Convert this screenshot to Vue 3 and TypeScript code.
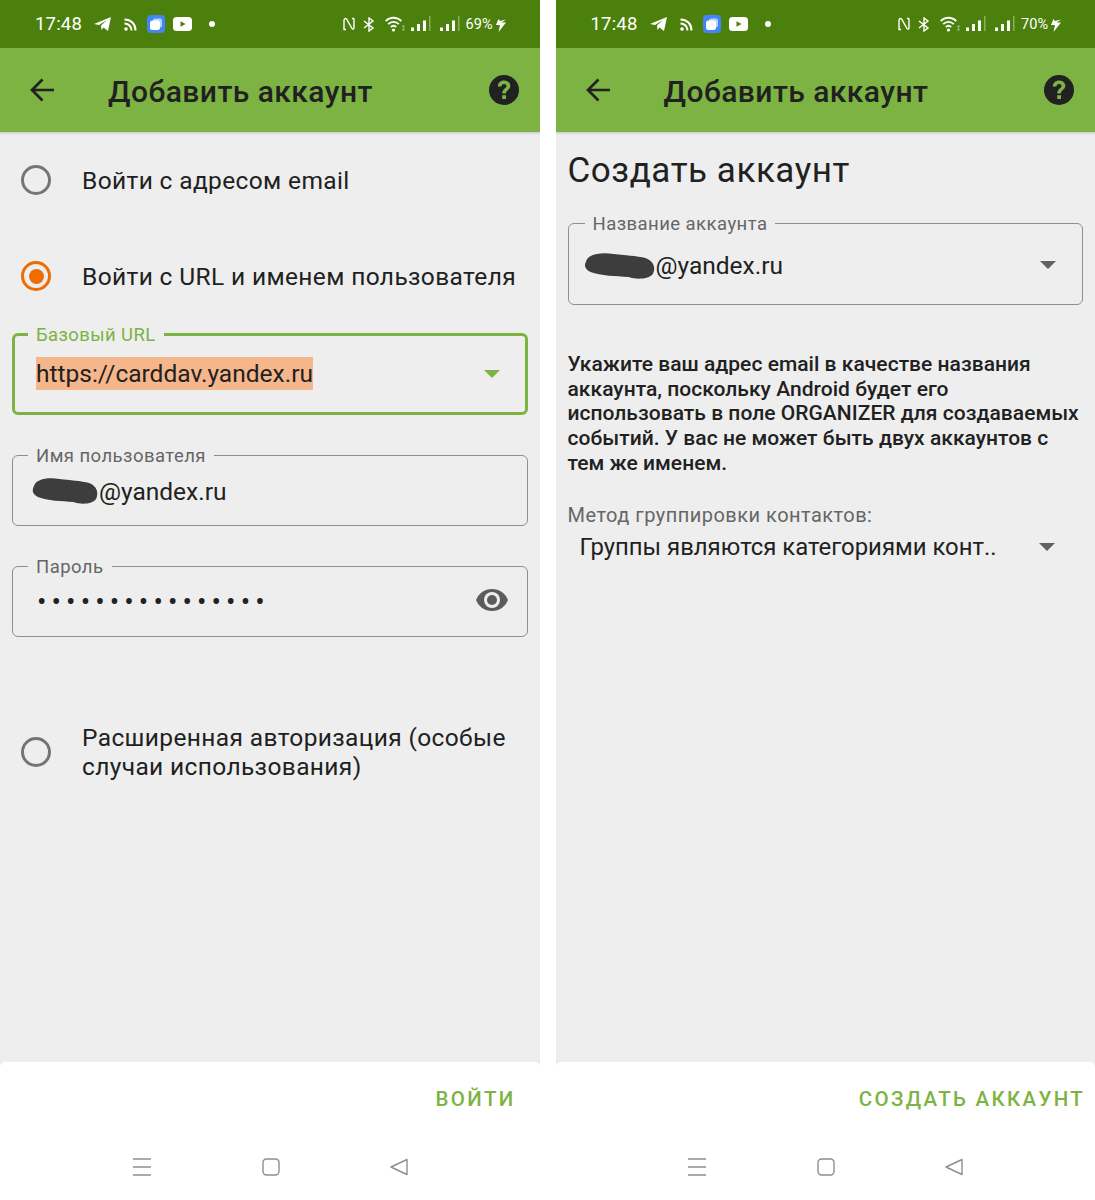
<script setup lang="ts">
interface Phone {
  id: string
  battery: string
  action: string
}
const phones: Phone[] = [
  { id: 'login', battery: '69%', action: 'ВОЙТИ' },
  { id: 'create', battery: '70%', action: 'СОЗДАТЬ АККАУНТ' },
]
const blobPath = 'M4 9C6 2 18 0 30 2C40 3 52 4 60 6C68 9 70 16 67 22C64 27 52 28 44 25C32 24 18 24 8 20C2 17 2 13 4 9Z'
</script>

<template>
  <div class="screens">
    <section v-for="phone in phones" :key="phone.id" class="phone">
      <div class="status">
        <span class="time">17:48</span>
        <svg class="ic tg" width="18" height="16" viewBox="0 0 18 16"><path d="M0 8 17 1 14 15 9.500 11.500 7.500 14 7 9.500 13 4 5 9Z" fill="#fff"/></svg>
        <svg class="ic rss" width="13" height="13" viewBox="0 0 13 13" fill="none" stroke="#fff" stroke-width="2"><circle cx="2" cy="11" r="1.800" fill="#fff" stroke="none"/><path d="M0.500 5.500C4.500 5.500 7.500 8.500 7.500 12.500M0.500 1.500C7 1.500 11.500 6 11.500 12.500"/></svg>
        <svg class="ic app" width="18" height="18" viewBox="0 0 18 18"><rect width="18" height="18" rx="4" fill="#4285f4"/><rect x="6" y="3.500" width="9" height="9" rx="2" fill="#b9d2fb"/><rect x="3" y="5.500" width="10" height="9.500" rx="2.500" fill="#fff"/></svg>
        <svg class="ic yt" width="19" height="14" viewBox="0 0 19 14"><rect width="19" height="14" rx="3.500" fill="#fff"/><path d="M7.500 4.200 12.500 7 7.500 9.800Z" fill="#4c800c"/></svg>
        <span class="dot"></span>
        <span class="status-gap"></span>
        <svg class="ic nfc" width="12" height="14" viewBox="0 0 12 14" fill="none" stroke="#fff" stroke-width="1.400"><path d="M1 3.500C1 1.500 2.500 1 3.500 2L9 11.500C9.600 12.500 11 12.300 11 10.500V1.500M1 3.500V12.500H3M11 1.500H9"/></svg>
        <svg class="ic bt" width="12" height="15" viewBox="0 0 12 15" fill="none" stroke="#fff" stroke-width="1.400"><path d="M1 4 10 11 6 14V1L10 4 1 11"/></svg>
        <svg class="ic wifi" width="20" height="16" viewBox="0 0 20 16" fill="none" stroke="#fff" stroke-width="1.800"><path d="M.7 5.200C5 .6 12 .6 16.300 5.200M3.200 8.200C6.300 5 10.700 5 13.800 8.200M5.800 11C7.500 9.400 9.500 9.400 11.200 11"/><circle cx="8.500" cy="14" r="1.600" fill="#fff" stroke="none"/><path d="M18.500 9.500V15" stroke="#a6c185" stroke-width="2" stroke-dasharray="2 1"/></svg>
        <svg v-for="n in 2" :key="n" class="ic bars" width="20" height="16" viewBox="0 0 20 16"><rect x="0" y="11.500" width="3" height="3.500" fill="#fff"/><rect x="6" y="8" width="3" height="7" fill="#fff"/><rect x="12" y="4.500" width="3" height="10.500" fill="#fff"/><rect x="18" y="0" width="1.500" height="15" fill="#8bad5f"/></svg>
        <span class="battery">{{ phone.battery }}</span>
        <svg class="ic bolt" width="10" height="15" viewBox="0 0 10 15"><path d="M10 2.500 4 4 2.500 2 0 8H4L2.500 15 10 5.500H5.500Z" fill="#fff"/></svg>
      </div>

      <header class="appbar">
        <svg class="back" width="24" height="26" viewBox="0 0 24 26" fill="none" stroke="#212121" stroke-width="2.700"><path d="M24 13H2M12.500 2.500 2 13 12.500 23.500"/></svg>
        <h1>Добавить аккаунт</h1>
        <svg class="help" width="30" height="30" viewBox="0 0 30 30"><circle cx="15" cy="15" r="15" fill="#212121"/><path d="M8.800 11.500C8.800 7.800 11.500 5.400 15 5.400C18.700 5.400 21.300 7.600 21.300 10.800C21.300 14.800 17 15.100 17 18.600H13.200C13.200 13.600 17.500 13.400 17.500 11C17.500 9.700 16.400 8.900 15 8.900C13.500 8.900 12.500 10 12.500 11.500Z" fill="#7cb342"/><rect x="13.200" y="20.200" width="3.800" height="3.800" fill="#7cb342"/></svg>
      </header>

      <main v-if="phone.id === 'login'" class="body">
        <label class="radio-row">
          <span class="radio"></span>
          <span>Войти с адресом email</span>
        </label>
        <label class="radio-row">
          <span class="radio on"></span>
          <span>Войти с URL и именем пользователя</span>
        </label>

        <div class="field focused url">
          <span class="legend">Базовый URL</span>
          <span class="value"><span class="selected">https://carddav.yandex.ru</span></span>
          <span class="caret green"></span>
        </div>
        <div class="field user">
          <span class="legend">Имя пользователя</span>
          <span class="value">
            <svg class="blob" width="69" height="28" viewBox="0 0 70 28" preserveAspectRatio="none"><path :d="blobPath" fill="#3d3d3d"/></svg>@yandex.ru
          </span>
        </div>
        <div class="field pass">
          <span class="legend">Пароль</span>
          <span class="value dots">••••••••••••••••</span>
          <svg class="eye" width="34" height="24" viewBox="0 0 34 24"><path d="M17 1C9.500 1 3.500 5.500 1 12C3.500 18.500 9.500 23 17 23C24.500 23 30.500 18.500 33 12C30.500 5.500 24.500 1 17 1Z" fill="#5c5c5c"/><circle cx="17" cy="12" r="8" fill="#eee"/><circle cx="17" cy="12" r="5" fill="#5c5c5c"/></svg>
        </div>

        <label class="radio-row extra">
          <span class="radio"></span>
          <span>Расширенная авторизация (особые<br>случаи использования)</span>
        </label>
      </main>

      <main v-else class="body create">
        <h2>Создать аккаунт</h2>
        <div class="field account">
          <span class="legend">Название аккаунта</span>
          <span class="value">
            <svg class="blob" width="74" height="28" viewBox="0 0 70 28" preserveAspectRatio="none"><path :d="blobPath" fill="#3d3d3d"/></svg>@yandex.ru
          </span>
          <span class="caret"></span>
        </div>
        <p class="note">Укажите ваш адрес email в качестве названия аккаунта, поскольку Android будет его использовать в поле ORGANIZER для создаваемых событий. У вас не может быть двух аккаунтов с тем же именем.</p>
        <div class="group-label">Метод группировки контактов:</div>
        <div class="spinner">
          <span>Группы являются категориями конт..</span>
          <span class="caret"></span>
        </div>
      </main>

      <footer class="actions">
        <span>{{ phone.action }}</span>
      </footer>

      <nav class="navbar">
        <svg width="20" height="18" viewBox="0 0 20 18" fill="none" stroke="#8e8e8e" stroke-width="1.500"><path d="M1 1H19M1 9H19M1 17H19"/></svg>
        <svg width="18" height="18" viewBox="0 0 18 18" fill="none" stroke="#8e8e8e" stroke-width="1.400"><rect x="1" y="1" width="16" height="16" rx="3.500"/></svg>
        <svg width="18" height="18" viewBox="0 0 18 18" fill="none" stroke="#8e8e8e" stroke-width="1.400" stroke-linejoin="round"><path d="M17 1.500V16.500L1 9Z"/></svg>
      </nav>
    </section>
  </div>
</template>

<style>
html, body {
  margin: 0;
  background: #fff;
}
</style>

<style scoped>
.screens {
  display: flex;
  gap: 16px;
  width: 1095px;
  height: 1200px;
  overflow: hidden;
  font-family: Roboto, "Noto Sans", sans-serif;
  color: #212121;
}
.phone {
  flex: 1 1 0;
  display: flex;
  flex-direction: column;
  min-width: 0;
}
.status {
  height: 48px;
  flex: none;
  background: #4c800c;
  display: flex;
  align-items: center;
  padding: 0 26px 0 35px;
  color: #fff;
  box-sizing: border-box;
}
.time {
  font-size: 18.500px;
  margin-right: 12px;
  letter-spacing: 0.2px;
}
.ic {
  flex: none;
}
.tg {
  margin-right: 12px;
}
.rss {
  margin-right: 10px;
}
.app {
  margin-right: 8px;
}
.yt {
  margin-right: 17px;
}
.dot {
  width: 6px;
  height: 6px;
  border-radius: 50%;
  background: #fff;
}
.status-gap {
  flex: 1;
}
.nfc {
  margin-right: 8px;
}
.bt {
  margin-right: 10px;
}
.wifi {
  margin-right: 6px;
}
.bars {
  margin-right: 9px;
}
.bars + .bars {
  margin-right: 6px;
}
.battery {
  font-size: 14.500px;
  margin-right: 3px;
}
.bolt {
  margin-right: 8px;
}
.appbar {
  height: 84px;
  flex: none;
  background: #7cb342;
  display: flex;
  align-items: center;
  padding: 0 21px 0 30px;
  box-sizing: border-box;
}
.appbar h1 {
  flex: 1;
  margin: 3px 0 0 54px;
  font-size: 30px;
  font-weight: 500;
  letter-spacing: 0.45px;
}
.back {
  margin-top: -1px;
}
.body {
  flex: 1;
  background: #eee;
  box-shadow: inset 0 3px 3px -2px rgba(0, 0, 0, 0.18);
  padding: 0 12px;
  display: flex;
  flex-direction: column;
  min-height: 0;
}
.radio-row {
  height: 96px;
  flex: none;
  display: flex;
  align-items: center;
  gap: 31px;
  padding-left: 9px;
  font-size: 24.500px;
  line-height: 29px;
  letter-spacing: 0.37px;
}
.radio {
  width: 30px;
  height: 30px;
  flex: none;
  box-sizing: border-box;
  border: 3px solid #757575;
  border-radius: 50%;
  display: flex;
  align-items: center;
  justify-content: center;
}
.radio.on {
  border-color: #ef6c00;
}
.radio.on::after {
  content: "";
  width: 15px;
  height: 15px;
  border-radius: 50%;
  background: #ef6c00;
}
.extra {
  margin-top: 67px;
}
.field {
  position: relative;
  flex: none;
  display: flex;
  align-items: center;
  box-sizing: border-box;
  border: 1.500px solid #8f8f8f;
  border-radius: 6px;
  padding: 0 23px;
  font-size: 24.500px;
  letter-spacing: 0;
}
.legend {
  position: absolute;
  left: 15px;
  top: -11px;
  padding: 0 8px;
  background: #eee;
  font-size: 18.500px;
  line-height: 22px;
  letter-spacing: 0.45px;
  color: #666;
}
.focused {
  border: 3px solid #7cb342;
}
.focused .legend {
  top: -12px;
  left: 13px;
  color: #7cb342;
  letter-spacing: 0.4px;
}
.url {
  height: 82px;
  margin-top: 9px;
}
.url .value {
  margin: -1px 0 0 -2px;
}
.selected {
  display: inline-block;
  background: #f6b68b;
  line-height: 33px;
}
.user {
  height: 71px;
  margin-top: 40px;
}
.pass {
  height: 71px;
  margin-top: 40px;
}
.value {
  flex: 1;
  display: flex;
  align-items: center;
}
.user .value {
  margin: 1px 0 0 -6px;
}
.dots {
  letter-spacing: 5.100px;
  font-size: 28px;
  margin: -1px 0 0 1px;
}
.caret {
  flex: none;
  width: 0;
  height: 0;
  border-left: 8px solid transparent;
  border-right: 8px solid transparent;
  border-top: 8px solid #616161;
  margin-right: 3px;
}
.caret.green {
  border-top-color: #7cb342;
  margin: -1px 2px 0 0;
}
.eye {
  margin-right: -5px;
  margin-top: -3px;
}
.create h2 {
  margin: 15px 0 0;
  font-size: 35px;
  line-height: 48px;
  font-weight: 400;
  letter-spacing: 0.55px;
}
.account {
  height: 82px;
  margin-top: 28px;
}
.account .legend {
  left: 16px;
}
.account .value {
  margin: 3px 0 0 -10px;
}
.account .caret {
  margin-top: 1px;
}
.note {
  margin: 47px 0 0;
  font-size: 21px;
  line-height: 24.700px;
  font-weight: 500;
  letter-spacing: 0.03px;
}
.group-label {
  margin-top: 27px;
  font-size: 20px;
  line-height: 24px;
  color: #666;
  letter-spacing: 0.48px;
}
.spinner {
  display: flex;
  align-items: center;
  justify-content: space-between;
  margin-top: 4px;
  padding: 0 25px 0 12px;
  font-size: 23.900px;
  line-height: 32px;
}
.actions {
  height: 71px;
  flex: none;
  margin-top: -5px;
  background: #fff;
  border-radius: 5px;
  display: flex;
  align-items: center;
  justify-content: flex-end;
  box-sizing: border-box;
  padding: 2px 24px 0 0;
  font-size: 20.500px;
  font-weight: 500;
  letter-spacing: 2.300px;
  color: #7cb342;
  position: relative;
}
.phone + .phone .actions {
  padding-right: 10px;
}
.navbar {
  height: 67px;
  flex: none;
  background: #fff;
  display: flex;
  align-items: center;
  justify-content: center;
  gap: 110px;
}
</style>
